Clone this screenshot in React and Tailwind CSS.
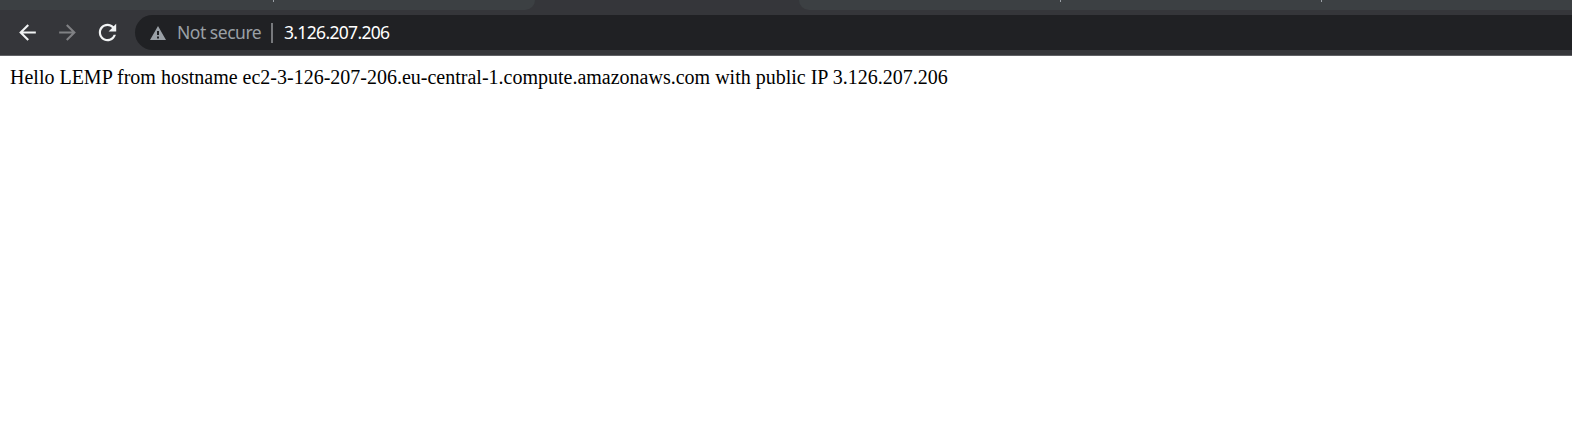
const icon = "block h-[25px] w-[25px] shrink-0 fill-current";

function TabStrip() {
  return (
    <div className="flex h-[10px] shrink-0 items-start bg-[#35363a]">
      <div className="h-[10px] w-[535px] rounded-br-[10px] bg-[#3c4043] pl-[273px]">
        <div className="h-[2px] w-px bg-[#9aa0a6]" />
      </div>
      <div className="h-[10px] w-[264px]" />
      <div className="flex h-[10px] flex-1 gap-[260px] rounded-bl-[10px] bg-[#3c4043] pl-[261px]">
        <div className="h-[2px] w-px bg-[#9aa0a6]" />
        <div className="h-[2px] w-px bg-[#9aa0a6]" />
      </div>
    </div>
  );
}

function Toolbar() {
  return (
    <div className="flex h-[46px] shrink-0 items-center border-b border-[#606165] bg-[#35363a] pl-[15px] font-['Noto_Sans',sans-serif] text-[17.5px]">
      <button aria-label="Back" className="text-[#f1f3f4]">
        <svg viewBox="0 0 24 24" className={icon}>
          <path d="M20 11H7.83l5.59-5.59L12 4l-8 8 8 8 1.41-1.41L7.83 13H20v-2z" />
        </svg>
      </button>
      <button aria-label="Forward" className="ml-[15px] text-[#808184]">
        <svg viewBox="0 0 24 24" className={icon}>
          <path d="M12 4l-1.41 1.41L16.17 11H4v2h12.17l-5.58 5.59L12 20l8-8z" />
        </svg>
      </button>
      <button aria-label="Reload" className="ml-[15px] text-[#f1f3f4]">
        <svg viewBox="0.5 0.5 23 23" className={icon}>
          <path d="M17.65 6.35C16.2 4.9 14.21 4 12 4c-4.42 0-7.99 3.58-7.99 8s3.57 8 7.99 8c3.73 0 6.84-2.55 7.73-6h-2.08c-.82 2.33-3.04 4-5.65 4-3.31 0-6-2.69-6-6s2.69-6 6-6c1.66 0 3.14.69 4.22 1.78L13 11h7V4l-2.35 2.35z" />
        </svg>
      </button>
      <div className="ml-[15px] flex h-[35px] flex-1 items-center rounded-l-full bg-[#202124] pl-[15px]">
        <svg viewBox="0 0 16 14" className="block h-[14px] w-4 shrink-0 fill-[#9aa0a6]">
          <path fillRule="evenodd" d="M8 0l8 14H0L8 0zM7 5v4h2V5H7zm0 5.5v2h2v-2H7z" />
        </svg>
        <span className="ml-[11px] w-[94px] whitespace-nowrap leading-[35px] tracking-[-0.48px] text-[#9aa0a6]">Not secure</span>
        <span className="h-5 w-[2px] bg-[#77797c]" />
        <span className="ml-[11px] whitespace-nowrap leading-[35px] tracking-[-0.67px] text-white">3.126.207.206</span>
      </div>
    </div>
  );
}

export default function App() {
  return (
    <div className="flex h-[444px] w-full flex-col overflow-hidden bg-white">
      <TabStrip />
      <Toolbar />
      <main className="px-[10px] pt-[10px] font-['Liberation_Serif',serif] text-[20px] leading-[23px] text-black">
        Hello LEMP from hostname ec2-3-126-207-206.eu-central-1.compute.amazonaws.com with public IP 3.126.207.206
      </main>
    </div>
  );
}
